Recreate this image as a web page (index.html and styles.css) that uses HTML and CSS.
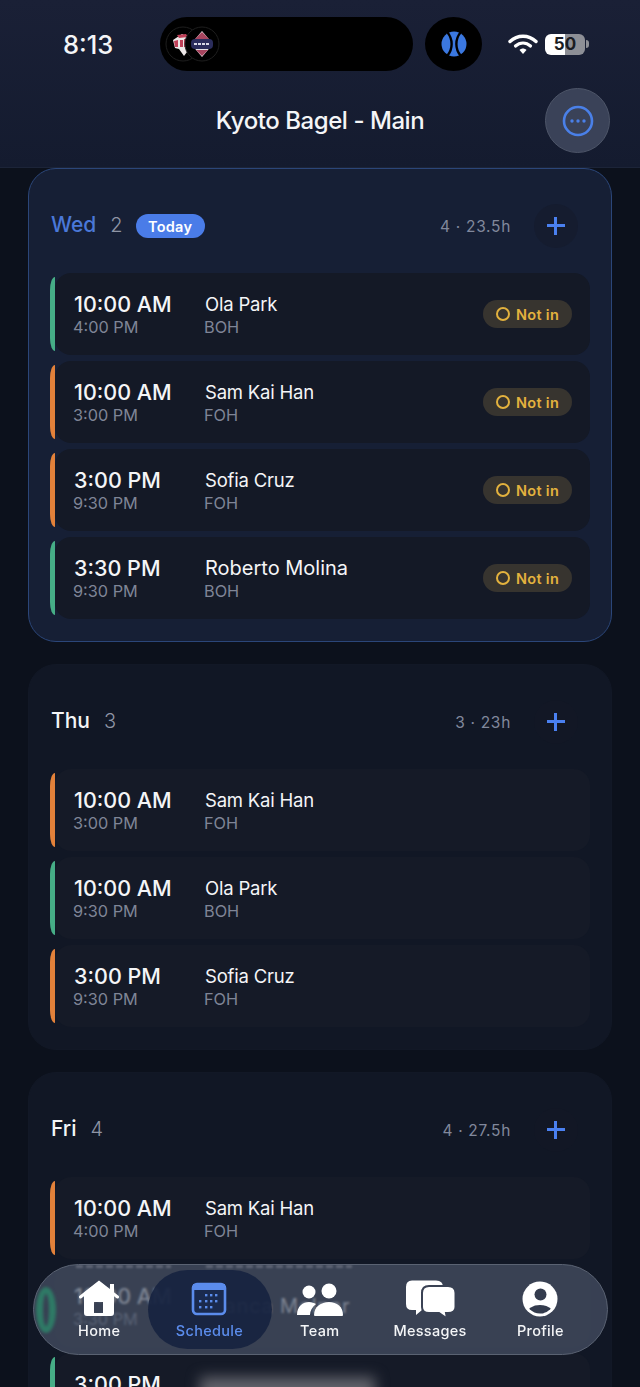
FILE: index.html
```html
<!DOCTYPE html>
<html lang="en">
<head>
    <meta charset="UTF-8">
    <meta name="viewport" content="width=device-width, initial-scale=1.0">
    <title>Kyoto Bagel - Main</title>
    <link rel="stylesheet" href="styles.css">
</head>
<body>
    <header class="top">
        <div class="status-bar">
            <div class="clock">8:13</div>
            <div class="island">
                <svg class="team-logo" width="36" height="36" viewBox="0 0 36 36">
                    <circle cx="18" cy="18" r="17" fill="#000" stroke="#1e1e1e" />
                    <path d="M8 14 L17 8 L23 11 L22 26 L19 30 L14 23 L10 22 Z" fill="#eee8e8" />
                    <path d="M9 15 L13 14 L13 21 L10 21 Z M15 14 L18 14 L18 21 L15 21 Z M19 13 L22 13 L21 21 L19 21 Z" fill="#c04058" />
                    <path d="M12 9 L21 8 L23 11 L14 12 Z" fill="#c04058" />
                </svg>
                <svg class="team-logo team-logo-front" width="36" height="36" viewBox="0 0 36 36">
                    <circle cx="18" cy="18" r="17" fill="#000" stroke="#1e1e1e" />
                    <path d="M18 5 L29 18 L18 31 L7 18 Z" fill="#e6e2e6" />
                    <path d="M18 6 L25 13 L11 13 Z" fill="#a8455f" />
                    <path d="M12 24 L24 24 L18 30 Z" fill="#a8455f" />
                    <rect x="7" y="13" width="22" height="10" rx="4" fill="#2b2d5c" />
                    <path d="M10 18 H26" stroke="#d9d9e6" stroke-width="1.8" stroke-dasharray="3 1" />
                </svg>
            </div>
            <div class="ball">
                <svg width="26" height="26" viewBox="0 0 26 26">
                    <circle cx="13" cy="13" r="12.5" fill="#3b78e0" />
                    <path d="M6.5 1.5 C12 8 12 18 6.5 24.5 M19.5 1.5 C14 8 14 18 19.5 24.5" fill="none" stroke="#000" stroke-width="2.4" />
                </svg>
            </div>
            <div class="status-icons">
                <svg width="30" height="22" viewBox="0 0 30 22">
                    <path d="M2 8.5 C9.5 1.5 20.5 1.5 28 8.5" fill="none" stroke="#fff" stroke-width="3.4" stroke-linecap="round" />
                    <path d="M7.5 13 C12 9 18 9 22.5 13" fill="none" stroke="#fff" stroke-width="3.2" stroke-linecap="round" />
                    <path d="M11.5 17 L15 21 L18.5 17 C16.5 15 13.5 15 11.5 17 Z" fill="#fff" />
                </svg>
                <div class="battery"><span>50</span></div>
                <div class="battery-nub"></div>
            </div>
        </div>
        <div class="title-row">
            <h1>Kyoto Bagel - Main</h1>
            <button class="more-btn">
                <svg width="34" height="34" viewBox="0 0 34 34">
                    <circle cx="17" cy="17" r="14" fill="none" stroke="#4a80e8" stroke-width="2.6" />
                    <circle cx="11" cy="17" r="1.7" fill="#4a80e8" />
                    <circle cx="17" cy="17" r="1.7" fill="#4a80e8" />
                    <circle cx="23" cy="17" r="1.7" fill="#4a80e8" />
                </svg>
            </button>
        </div>
    </header>

    <main class="days">
        <section class="day day-today">
            <div class="day-head">
                <span class="day-name">Wed</span>
                <span class="day-num">2</span>
                <span class="today-tag">Today</span>
                <span class="day-stats">4 · 23.5h</span>
                <button class="add-btn"><span class="plus"></span></button>
            </div>
            <div class="shift shift-boh">
                <div class="times"><div class="start">10:00 AM</div><div class="end">4:00 PM</div></div>
                <div class="person"><div class="name">Ola Park</div><div class="area">BOH</div></div>
                <div class="not-in"><i></i>Not in</div>
            </div>
            <div class="shift shift-foh">
                <div class="times"><div class="start">10:00 AM</div><div class="end">3:00 PM</div></div>
                <div class="person"><div class="name">Sam Kai Han</div><div class="area">FOH</div></div>
                <div class="not-in"><i></i>Not in</div>
            </div>
            <div class="shift shift-foh">
                <div class="times"><div class="start">3:00 PM</div><div class="end">9:30 PM</div></div>
                <div class="person"><div class="name">Sofia Cruz</div><div class="area">FOH</div></div>
                <div class="not-in"><i></i>Not in</div>
            </div>
            <div class="shift shift-boh">
                <div class="times"><div class="start">3:30 PM</div><div class="end">9:30 PM</div></div>
                <div class="person"><div class="name name-big">Roberto Molina</div><div class="area">BOH</div></div>
                <div class="not-in"><i></i>Not in</div>
            </div>
        </section>

        <section class="day">
            <div class="day-head">
                <span class="day-name">Thu</span>
                <span class="day-num">3</span>
                <span class="day-stats">3 · 23h</span>
                <button class="add-btn"><span class="plus"></span></button>
            </div>
            <div class="shift shift-foh">
                <div class="times"><div class="start">10:00 AM</div><div class="end">3:00 PM</div></div>
                <div class="person"><div class="name">Sam Kai Han</div><div class="area">FOH</div></div>
            </div>
            <div class="shift shift-boh">
                <div class="times"><div class="start">10:00 AM</div><div class="end">9:30 PM</div></div>
                <div class="person"><div class="name">Ola Park</div><div class="area">BOH</div></div>
            </div>
            <div class="shift shift-foh">
                <div class="times"><div class="start">3:00 PM</div><div class="end">9:30 PM</div></div>
                <div class="person"><div class="name">Sofia Cruz</div><div class="area">FOH</div></div>
            </div>
        </section>

        <section class="day">
            <div class="day-head">
                <span class="day-name">Fri</span>
                <span class="day-num">4</span>
                <span class="day-stats">4 · 27.5h</span>
                <button class="add-btn"><span class="plus"></span></button>
            </div>
            <div class="shift shift-foh">
                <div class="times"><div class="start">10:00 AM</div><div class="end">4:00 PM</div></div>
                <div class="person"><div class="name">Sam Kai Han</div><div class="area">FOH</div></div>
            </div>
            <!-- this one sits under the glass tab bar, the bar is drawn refracted there -->
            <div class="shift shift-under">
                <div class="times"><div class="start">10:00 AM</div><div class="end">3:30 PM</div></div>
                <div class="person"><div class="name name-big">Bianca Molnar</div></div>
            </div>
            <div class="shift shift-boh">
                <div class="times"><div class="start">3:00 PM</div></div>
                <div class="person"><div class="smudge"></div></div>
            </div>
        </section>
    </main>

    <nav class="tabbar">
        <div class="green-ring"></div>
        <div class="edge-ghost edge-ghost-time"></div>
        <div class="edge-ghost edge-ghost-name"></div>
        <a class="tab" href="#">
            <svg width="40" height="39" viewBox="0 0 40 39">
                <path d="M5 13 L20 1 L35 13 V33 Q35 36 32 36 H8 Q5 36 5 33 Z M15 22 V33 H24 V22 Z" fill="#fff" fill-rule="evenodd" />
                <path d="M1.5 17 L20 2.5 L38.5 17" fill="none" stroke="#fff" stroke-width="3" stroke-linecap="round" />
                <rect x="31" y="4" width="4" height="9" fill="#fff" />
            </svg>
            <span>Home</span>
        </a>
        <a class="tab tab-active" href="#">
            <svg width="36" height="39" viewBox="0 0 36 39">
                <rect x="2" y="4" width="32" height="30" rx="4" fill="#1a2a4e" stroke="#5b8cec" stroke-width="2.6" />
                <rect x="2" y="4" width="32" height="6" fill="#5b8cec" />
                <g fill="#5b8cec">
                    <rect x="14" y="14" width="2.4" height="2.4" /><rect x="19" y="14" width="2.4" height="2.4" /><rect x="24" y="14" width="2.4" height="2.4" />
                    <rect x="8" y="20" width="2.4" height="2.4" /><rect x="14" y="20" width="2.4" height="2.4" /><rect x="19" y="20" width="2.4" height="2.4" /><rect x="24" y="20" width="2.4" height="2.4" />
                    <rect x="8" y="26" width="2.4" height="2.4" /><rect x="14" y="26" width="2.4" height="2.4" /><rect x="19" y="26" width="2.4" height="2.4" />
                </g>
            </svg>
            <span>Schedule</span>
        </a>
        <a class="tab" href="#">
            <svg width="48" height="39" viewBox="0 0 48 39">
                <circle cx="13" cy="12" r="6.5" fill="#fff" />
                <circle cx="33" cy="11" r="7.5" fill="#fff" />
                <path d="M1 35 C1 26 7 22 13 22 C16 22 18 23 20 24 C16 27 14 31 14 35 Z" fill="#fff" />
                <path d="M18 35 C18 27 25 22 33 22 C41 22 47 27 47 35 Q47 36 46 36 H19 Q18 36 18 35 Z" fill="#fff" />
            </svg>
            <span>Team</span>
        </a>
        <a class="tab" href="#">
            <svg width="50" height="39" viewBox="0 0 50 39">
                <path d="M7 0.5 H31 Q38 0.5 38 7 V24 Q38 30 31 30 H17 L11 35 V30 H7 Q1 30 1 24 V7 Q1 0.5 7 0.5 Z" fill="#fff" />
                <path d="M24 6 H43 Q50.5 6 50.5 13 V27 Q50.5 33 43 33 H41 L42 38.5 L34 33 H24 Q17 33 17 27 V13 Q17 6 24 6 Z" fill="#fff" stroke="#3a4254" stroke-width="2" />
            </svg>
            <span>Messages</span>
        </a>
        <a class="tab" href="#">
            <svg width="36" height="39" viewBox="0 0 36 39">
                <defs><clipPath id="face"><circle cx="18" cy="19" r="14.5" /></clipPath></defs>
                <circle cx="18" cy="19" r="17.5" fill="#fff" />
                <circle cx="18.5" cy="14.5" r="6" fill="#333b4d" />
                <ellipse cx="18" cy="33.5" rx="13" ry="8.5" fill="#333b4d" clip-path="url(#face)" />
            </svg>
            <span>Profile</span>
        </a>
    </nav>
</body>
</html>
```

FILE: styles.css
```css
* {
    margin: 0;
    padding: 0;
    box-sizing: border-box;
}

html, body {
    height: 1387px;
    overflow: hidden;
}

body {
    position: relative;
    font-family: Inter, 'Liberation Sans', sans-serif;
    background: #0c111c;
    color: #f4f5f7;
}

button {
    border: none;
    background: none;
    font: inherit;
}

/* top */
.top {
    height: 168px;
    padding-top: 17px;
    background: linear-gradient(180deg, #1a2036 0%, #141b2f 100%);
    border-bottom: 1px solid #1c2438;
}

.status-bar {
    display: flex;
    align-items: center;
    height: 54px;
}

.clock {
    width: 160px;
    padding-left: 63px;
    font-size: 25.5px;
    font-weight: 500;
}

.island {
    width: 253px;
    height: 54px;
    border-radius: 27px;
    background: #000;
    display: flex;
    align-items: center;
    padding-left: 5px;
}

.team-logo {
    display: block;
}

.team-logo-front {
    margin-left: -17px;
}

.ball {
    width: 57px;
    height: 54px;
    margin-left: 12px;
    border-radius: 50%;
    background: #000;
    display: flex;
    align-items: center;
    justify-content: center;
}

.status-icons {
    display: flex;
    align-items: center;
    margin-left: 26px;
}

.battery {
    width: 40px;
    height: 21px;
    margin-left: 7px;
    border-radius: 6px;
    background: linear-gradient(90deg, #fff 0%, #fff 50%, #8d8f96 50%, #8d8f96 100%);
    color: #1a1c22;
    font-size: 17px;
    font-weight: 700;
    line-height: 21px;
    text-align: center;
}

.battery-nub {
    width: 3px;
    height: 8px;
    margin-left: 1px;
    border-radius: 0 3px 3px 0;
    background: #8d8f96;
}

.title-row {
    display: flex;
    align-items: center;
    justify-content: center;
    position: relative;
    margin-top: 17px;
    height: 65px;
}

h1 {
    font-size: 24px;
    font-weight: 500;
    letter-spacing: -0.45px;
}

.more-btn {
    position: absolute;
    right: 30px;
    top: 0;
    width: 65px;
    height: 65px;
    border-radius: 50%;
    background: #3a4258;
    border: 1px solid #4d5568;
    display: flex;
    align-items: center;
    justify-content: center;
}

/* day cards */
.days {
    display: flex;
    flex-direction: column;
    gap: 22px;
    padding: 0 28px;
}

.day {
    border: 1px solid #121826;
    border-radius: 28px;
    background: #111725;
    padding: 35px 21px 22px;
    display: flex;
    flex-direction: column;
    gap: 6px;
}

.day-today {
    background: #161f35;
    border-color: #2b4679;
}

.day-head {
    display: flex;
    align-items: center;
    height: 44px;
    padding: 0 12px 0 1px;
    margin-bottom: 19px;
}

.day-name {
    font-size: 21px;
    font-weight: 500;
    margin-top: -3px;
}

.day-today .day-name {
    color: #4a78d8;
}

.day-num {
    margin-left: 14px;
    font-size: 20px;
    font-weight: 300;
    color: #8f95a5;
    margin-top: -3px;
}

.today-tag {
    margin-left: 13px;
    width: 69px;
    height: 24px;
    border-radius: 12px;
    background: #4a7ce8;
    color: #fff;
    font-size: 14.5px;
    font-weight: 600;
    letter-spacing: 0.3px;
    line-height: 25px;
    text-align: center;
}

.day-stats {
    margin-left: auto;
    margin-right: 23px;
    font-size: 15.5px;
    letter-spacing: 0.7px;
    color: #81889c;
}

.add-btn {
    width: 44px;
    height: 44px;
    border-radius: 50%;
    background: rgba(20, 24, 38, 0.35);
    position: relative;
}

.plus {
    position: absolute;
    left: 13px;
    top: 13px;
    width: 18px;
    height: 18px;
    background:
        linear-gradient(#4a80f0, #4a80f0) center / 100% 3.4px no-repeat,
        linear-gradient(#4a80f0, #4a80f0) center / 3.4px 100% no-repeat;
}

/* shifts */
.shift {
    height: 82px;
    margin-left: 5px;
    display: flex;
    align-items: center;
    position: relative;
    border-radius: 16px;
    background: #151a27;
    padding: 0 18px 0 19px;
}

.day-today .shift {
    background: #141926;
}

/* colour bar hangs off the row's left edge */
.shift::before {
    content: "";
    position: absolute;
    left: -5px;
    top: 4px;
    bottom: 4px;
    width: 5px;
    border-radius: 5px 0 0 5px / 13px 0 0 13px;
}

.shift-boh::before {
    background: #46ad86;
}

.shift-foh::before {
    background: #e2813a;
}

.times {
    width: 131px;
    min-height: 46px;
}

.start {
    font-size: 21.5px;
    font-weight: 500;
    line-height: 26px;
}

.end {
    font-size: 16.3px;
    line-height: 20px;
    margin-left: -1px;
    color: #7f8596;
}

.name {
    font-size: 18.5px;
    line-height: 26px;
    letter-spacing: -0.2px;
}

.name-big {
    font-size: 20px;
    letter-spacing: 0;
}

.shift-under .name {
    letter-spacing: 0.8px;
}

.area {
    font-size: 16.3px;
    line-height: 20px;
    margin-left: -1px;
    color: #7f8596;
}

.smudge {
    width: 175px;
    height: 60px;
    margin-top: 26px;
    margin-left: -5px;
    background: #62636b;
    filter: blur(7px);
}

.not-in {
    margin-left: auto;
    width: 89px;
    height: 28px;
    border-radius: 14px;
    background: #37342f;
    color: #e3b23e;
    font-size: 14.5px;
    font-weight: 600;
    letter-spacing: 0.3px;
    display: flex;
    align-items: center;
    gap: 6px;
    padding-left: 13px;
}

.not-in i {
    width: 14px;
    height: 14px;
    border: 2px solid #e3b23e;
    border-radius: 50%;
}

/* tab bar */
.tabbar {
    position: absolute;
    left: 33px;
    top: 1264px;
    width: 575px;
    height: 91px;
    border-radius: 46px;
    border: 1px solid #5a6272;
    background: rgba(73, 83, 102, 0.7);
    backdrop-filter: blur(0.8px);
    display: flex;
    padding-left: 10px;
    overflow: hidden;
}

.green-ring {
    position: absolute;
    left: 2px;
    top: 22px;
    width: 20px;
    height: 46px;
    border: 7px solid #2f7a66;
    border-radius: 50%;
    filter: blur(1.5px);
}

/* the row text smeared along the top lip of the glass */
.edge-ghost {
    position: absolute;
    top: 0;
    height: 3px;
    opacity: 0.6;
    background: repeating-linear-gradient(90deg, #7c818e 0 7px, transparent 7px 10px);
    filter: blur(1px);
}

.edge-ghost-time {
    left: 42px;
    width: 95px;
}

.edge-ghost-name {
    left: 172px;
    width: 146px;
}

.tab {
    width: 110.3px;
    height: 89px;
    position: relative;
    display: flex;
    flex-direction: column;
    align-items: center;
    padding-top: 15px;
    color: #f4f5f7;
    font-size: 14.5px;
    font-weight: 500;
    letter-spacing: 0.3px;
    text-decoration: none;
}

.tab svg {
    display: block;
    margin-bottom: 3px;
}

.tab-active {
    color: #5b8cec;
}

.tab-active::before {
    content: "";
    position: absolute;
    left: -6px;
    top: 5px;
    width: 124px;
    height: 79px;
    border-radius: 40px;
    background: rgba(24, 35, 65, 0.93);
}

.tab-active svg, .tab-active span {
    position: relative;
}
```
